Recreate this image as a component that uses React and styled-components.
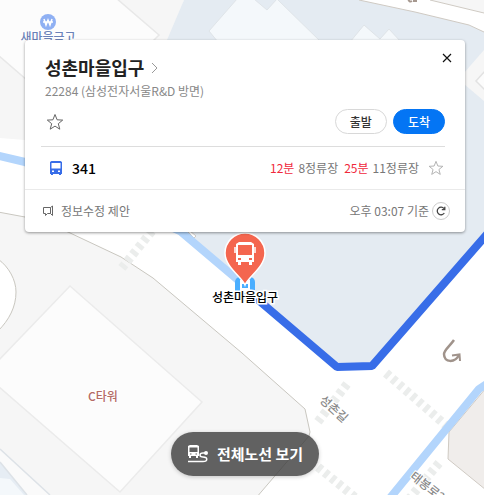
import React from 'react';
import styled, { createGlobalStyle } from 'styled-components';

const GlobalStyle = createGlobalStyle`
  *, *::before, *::after {
    box-sizing: border-box;
  }

  body {
    margin: 0;
    font-family: 'Noto Sans CJK KR', sans-serif;
    font-size: 12px;
    line-height: 18px;
    color: #222;
  }

  button, a {
    font: inherit;
    color: inherit;
    text-decoration: none;
  }
`;

const crosswalks = [
  'M152 231L121 269',
  'M347 384L317 423',
  'M386 373L450 429',
  'M318 467L362 503',
  'M439 463L409 499'
];

const CityMap = () => (
  <MapCanvas viewBox="0 0 484 495" preserveAspectRatio="xMidYMid slice">
    <rect width="484" height="495" fill="#fff" />

    <path d="M0 0H184L130 160L25 140L0 138Z" fill="#f6f6f6" />
    <path d="M-2 -2H116L159 35L150 44L80 126L-2 55Z" fill="#fcfcfc" stroke="#e8e8e8" strokeWidth="1.5" />

    <path d="M184 0H359L415 12L469 25L484 32V238L372 366H337L180 232L120 190L167 40Z" fill="#e4ebf2" />
    <path d="M237 -1L209 31L218 42H321L277 -1L267 10L254 -1Z" fill="#f4f8fb" stroke="#dfe4e8" />
    <path d="M350 42L364 25L380 39L389 29L401 42Z" fill="#f4f8fb" stroke="#dfe4e8" />
    <path d="M359 0L415 12L469 25L484 32" fill="none" stroke="#cfcac3" />
    <path d="M430 0H484V13Z" fill="#f6f6f6" />
    <path d="M430 0L484 13" stroke="#cfcac3" />
    <path d="M484 50L464 73V84L484 101Z" fill="#f6f6f6" />
    <path d="M486 70L476 81L486 91Z" fill="#fcfcfc" stroke="#e2e2e2" strokeWidth="1.5" />
    <path d="M408 -2Q409 3 412 1M413 1L417 1" fill="none" stroke="#a6988f" strokeWidth="2" />

    <path
      d="M-2 212L25 217L68 232L121 257L153 278L242 353L305 409L310 432L309 436L256 498H-2Z"
      fill="#f6f6f6"
      stroke="#c9c7c0"
    />
    <path d="M-2 259C9 267 16 280 16 292C16 307 9 320 -2 331Z" fill="#fff" stroke="#c9c7c0" />
    <path d="M70 286L202 402L120 492L-2 386V361Z" fill="#fcfcfc" stroke="#ebebeb" strokeWidth="1.5" />
    <path d="M0 449L50 495H0Z" fill="#fafafa" />
    <path d="M0 462L27 495H0Z" fill="#e6edf4" />
    <path d="M0 478L10 479L24 495H0Z" fill="#f4f8fb" />
    <path d="M0 449L50 495M0 462L27 495" stroke="#dde2e7" strokeWidth="1.5" />
    <path d="M486 388L449 432L448 459L486 490Z" fill="#f0edeb" stroke="#cfcac3" />

    {crosswalks.map((d) => (
      <path key={d} d={d} stroke="#ebedec" strokeWidth="9" strokeDasharray="4.6 4" />
    ))}
    <path d="M187 231L194 238L196 236L190 231" fill="#fff" stroke="#cfcac3" />

    <g fill="none" strokeWidth="8" strokeLinejoin="bevel">
      <path d="M-5 155L25 162L180 231L245 286" stroke="#b3d5fc" />
      <path d="M390 498L479 389L490 382" stroke="#b3d5fc" />
      <path d="M243 287L337 367L372 366L488 233" stroke="#386de8" />
    </g>

    <g fill="none" stroke="#a0938b">
      <path d="M454 340C449 347 444 350 444 354C444 363 455 363 459 355" strokeWidth="2.5" />
      <path d="M452 355.5L459.5 354.5L460 361" strokeWidth="2" />
    </g>

    <circle cx="48" cy="22" r="8" fill="#8fb0f3" />
    <path d="M44 19L46 25L48 20L50 25L52 19M43 22H53" fill="none" stroke="#fff" strokeWidth="1.5" />

    <MapLabel x="48" y="42" fill="#6b82b8">새마을금고</MapLabel>
    <MapLabel x="103" y="401" fill="#b56b65">C타워</MapLabel>
    <MapLabel transform="translate(331 412) rotate(42)" fill="#888">성촌길</MapLabel>
    <MapLabel transform="translate(425 490) rotate(38)" fill="#888">태봉로2</MapLabel>

    <rect x="235" y="277" width="20" height="20" rx="5" fill="#4aaeff" />
    <path d="M240 280H250V293H248V295H246V293H244V295H241V293H240Z" fill="#fff" />
    <path d="M242 286H248" stroke="#4aaeff" strokeWidth="4" />
    <path
      d="M245 285C242 277 225 267 225 253A20 20 0 0 1 265 253C265 267 248 277 245 285Z"
      fill="#f4664f"
      stroke="#fff"
      strokeWidth="1.5"
    />
    <path
      fill="#fff"
      fillRule="evenodd"
      d="M239 242H251L254 244V262H252V265H249V262H241V265H238V262H236V244ZM238 245V255H252V245ZM238 258V260H241V258ZM249 258V260H252V258Z"
    />
    <path d="M235 247V253M255 247V253" stroke="#fff" strokeWidth="1.5" />
    <StopLabel x="245" y="302">성촌마을입구</StopLabel>
  </MapCanvas>
);

const Star = ({ size = 18 }) => (
  <svg width={size} height={size} viewBox="0 0 18 18" fill="none" stroke="currentColor">
    <path d="M9 1.5L11.1 6.8L16.7 7.1L12.3 10.7L13.8 16.2L9 13.1L4.2 16.2L5.7 10.7L1.3 7.1L6.9 6.8Z" />
  </svg>
);

const BusIcon = () => (
  <svg width="14" height="16" viewBox="0 0 14 16" fill="#386de8">
    <path
      fillRule="evenodd"
      d="M2.5 1H11.5L13 2V14H12V15H10V14H4V15H2V14H1V2ZM2.5 3V8.5H11.5V3ZM3 10.5V12H5V10.5ZM9 10.5V12H11V10.5Z"
    />
  </svg>
);

const arrivals = [
  { minutes: '12분', stops: '8정류장' },
  { minutes: '25분', stops: '11정류장' }
];

const App = () => (
  <Page>
    <GlobalStyle />
    <CityMap />
    <Card>
      <Header>
        <div>
          <Title>
            <a href="#stop">
              성촌마을입구
              <svg width="8" height="12" viewBox="0 0 8 12" fill="none" stroke="#999">
                <path d="M1 1L6 6L1 11" />
              </svg>
            </a>
          </Title>
          <Direction>22284 (삼성전자서울R&amp;D 방면)</Direction>
        </div>
        <IconButton aria-label="닫기">
          <svg width="10" height="10" viewBox="0 0 10 10" stroke="#111" strokeWidth="1.2">
            <path d="M1 1L9 9M9 1L1 9" />
          </svg>
        </IconButton>
      </Header>

      <Actions>
        <IconButton aria-label="즐겨찾기" $color="#666">
          <Star />
        </IconButton>
        <Buttons>
          <PillButton>출발</PillButton>
          <PillButton $primary>도착</PillButton>
        </Buttons>
      </Actions>

      <BusRow>
        <BusIcon />
        <BusNumber href="#341">341</BusNumber>
        <Arrivals>
          {arrivals.map(({ minutes, stops }) => (
            <Arrival key={minutes}>
              <strong>{minutes}</strong>
              <span>{stops}</span>
            </Arrival>
          ))}
        </Arrivals>
        <IconButton aria-label="341 즐겨찾기" $color="#aaa">
          <Star size={16} />
        </IconButton>
      </BusRow>

      <Footer>
        <Suggest href="#suggest">
          <svg width="12" height="12" viewBox="0 0 12 12" fill="none" stroke="#666">
            <path d="M8.5 2.5H1.5V8.5H3.5V10.5L5.5 8.5H8.5M8.5 2.5L10.5 1V10.5L8.5 8.5V2.5" />
          </svg>
          정보수정 제안
        </Suggest>
        <Updated>
          오후 03:07 기준
          <RefreshButton aria-label="새로고침">
            <svg width="10" height="10" viewBox="0 0 10 10" fill="none" stroke="#444" strokeWidth="1.3">
              <path d="M8.3 7A3.8 3.8 0 1 1 8 2.6M8.8 0.7V3.6H5.8" />
            </svg>
          </RefreshButton>
        </Updated>
      </Footer>
    </Card>

    <RouteButton>
      <svg width="22" height="20" viewBox="0 0 22 20" fill="none" stroke="#fff" strokeWidth="1.5">
        <path
          d="M3 1H10L12 2V12H11V14H9V12H4V14H2V12H1V2ZM2.5 3.5V8H10.5V3.5ZM3 9.5V10.5H4.5V9.5ZM8.5 9.5V10.5H10V9.5Z"
          fill="#fff"
          fillRule="evenodd"
          stroke="none"
        />
        <path d="M1 17.5H16C21 17.5 21 13 16 13C12 13 12 9 16 9H18" />
        <circle cx="19" cy="9" r="2" fill="#fff" stroke="none" />
      </svg>
      전체노선 보기
    </RouteButton>
  </Page>
);

export default App;

const Page = styled.main`
  position: relative;
  display: flex;
  flex-direction: column;
  min-height: 100vh;
  padding: 40px 19px 19px 25px;
  overflow: hidden;
`;

const MapCanvas = styled.svg`
  position: absolute;
  inset: 0;
  width: 100%;
  height: 100%;
`;

const MapLabel = styled.text`
  font-size: 12px;
  font-weight: 500;
  text-anchor: middle;
  stroke: #fff;
  stroke-width: 2px;
  paint-order: stroke;
`;

const StopLabel = styled(MapLabel)`
  fill: #000;
  stroke-width: 3px;
`;

const Card = styled.section`
  position: relative;
  background: #fff;
  border-radius: 4px;
  box-shadow: 0 1px 3px rgba(0, 0, 0, 0.4);
`;

const Header = styled.header`
  display: flex;
  justify-content: space-between;
  align-items: flex-start;
  padding: 13px 13px 0 20px;
`;

const Title = styled.h1`
  margin: 0;
  font-size: 18px;
  font-weight: 700;
  line-height: 28px;

  svg {
    margin-left: 7px;
    vertical-align: 1px;
  }
`;

const Direction = styled.p`
  margin: 1px 0;
  color: #888;
`;

const IconButton = styled.button`
  display: flex;
  padding: 0;
  border: 0;
  background: none;
  color: ${({ $color }) => $color || '#111'};
  cursor: pointer;
`;

const Actions = styled.div`
  display: flex;
  justify-content: space-between;
  align-items: center;
  margin: 0 20px 0 16px;
  padding: 8px 0 12px 5px;
  border-bottom: 1px solid #ddd;
`;

const Buttons = styled.div`
  display: flex;
  gap: 6px;
`;

const PillButton = styled.button`
  height: 25px;
  padding: 0 14px;
  border: 1px solid ${({ $primary }) => ($primary ? '#0475f4' : '#d8d8d8')};
  border-radius: 13px;
  background: ${({ $primary }) => ($primary ? '#0475f4' : '#fff')};
  color: ${({ $primary }) => ($primary ? '#fff' : '#333')};
  font-weight: 500;
  line-height: 18px;
  cursor: pointer;
`;

const BusRow = styled.div`
  display: flex;
  align-items: center;
  height: 42px;
  padding: 0 21px 0 24px;
`;

const BusNumber = styled.a`
  margin-left: 9px;
  font-size: 14px;
  font-weight: 500;
  color: #000;
`;

const Arrivals = styled.div`
  display: flex;
  gap: 6px;
  margin: 0 9px 0 auto;
`;

const Arrival = styled.div`
  display: flex;
  gap: 4px;
  color: #777;

  strong {
    font-weight: 400;
    color: #f0283c;
  }
`;

const Footer = styled.footer`
  display: flex;
  justify-content: space-between;
  align-items: center;
  height: 43px;
  padding: 0 15px 0 17px;
  border-top: 1px solid #eaeaea;
  color: #777;
`;

const Suggest = styled.a`
  display: flex;
  align-items: center;
  gap: 7px;
`;

const Updated = styled.div`
  display: flex;
  align-items: center;
  gap: 3px;
`;

const RefreshButton = styled.button`
  display: flex;
  justify-content: center;
  align-items: center;
  width: 18px;
  height: 18px;
  padding: 0;
  border: 1px solid #ccc;
  border-radius: 50%;
  background: #fff;
  cursor: pointer;
`;

const RouteButton = styled.button`
  position: relative;
  display: flex;
  align-items: center;
  align-self: center;
  gap: 8px;
  height: 44px;
  margin-top: auto;
  padding: 0 16px;
  border: 0;
  border-radius: 22px;
  background: rgba(60, 60, 60, 0.8);
  box-shadow: 0 1px 4px rgba(0, 0, 0, 0.2);
  cursor: pointer;

  && {
    font-size: 15px;
    font-weight: 700;
    color: #fff;
  }
`;
